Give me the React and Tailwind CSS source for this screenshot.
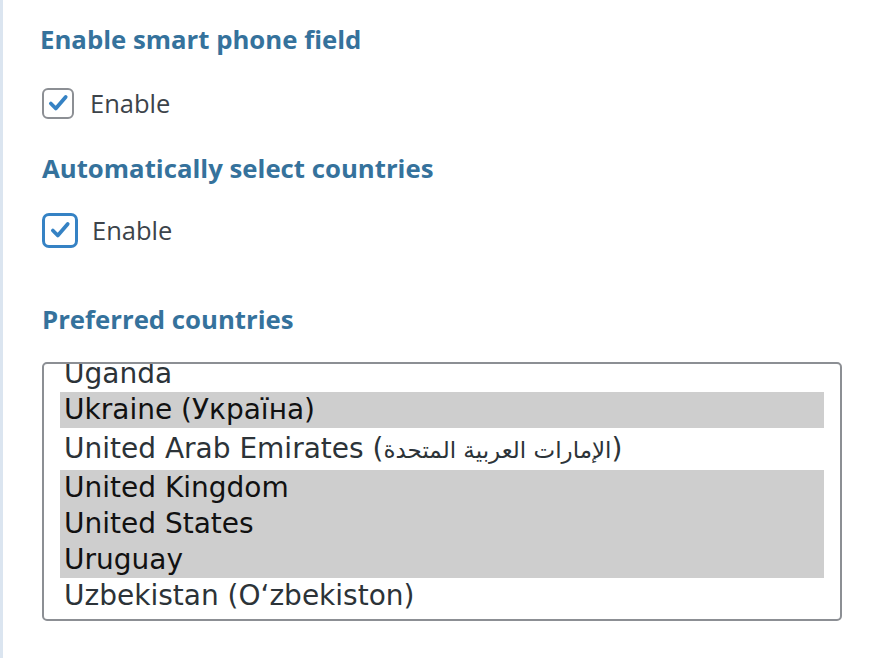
import React from "react";

function Check() {
  return (
    <svg viewBox="0 0 20 20" className="w-[22px] h-[22px]">
      <path d="M3.5 10.5 L8 15 L17 4.5" fill="none" stroke="#3582c4" strokeWidth="3.4" strokeLinecap="round" strokeLinejoin="round" />
    </svg>
  );
}

const options = [
  { t: "Uganda", sel: false },
  { t: "Ukraine (Україна)", sel: true },
  { t: "United Arab Emirates (", ar: "الإمارات العربية المتحدة", sel: false },
  { t: "United Kingdom", sel: true },
  { t: "United States", sel: true },
  { t: "Uruguay", sel: true },
  { t: "Uzbekistan (O‘zbekiston)", sel: false },
];

export default function App() {
  return (
    <div className="w-[884px] h-[658px] bg-white border-l-[3px] border-[#dbe5f0] overflow-hidden" style={{ fontFamily: "'Open Sans', 'Liberation Sans', sans-serif" }}>
      <div className="pl-[37px] pt-[24px] flex flex-col">
        <h2 className="h-[30px] leading-[30px] text-[25.75px] font-bold text-[#35729c] whitespace-nowrap">Enable smart phone field</h2>
        <label className="flex items-center mt-[33px] ml-[2px] h-[32px]">
          <span className="w-[32px] h-[31px] rounded-[6px] border-2 border-[#8c8f94] flex items-center justify-center">
            <Check />
          </span>
          <span className="ml-[16px] text-[25.5px] leading-[32px] text-[#3c434a]">Enable</span>
        </label>
        <h2 className="mt-[34px] ml-[2px] h-[30px] leading-[30px] text-[25.75px] font-bold text-[#35729c] whitespace-nowrap">Automatically select countries</h2>
        <label className="flex items-center mt-[29px] ml-[2px] h-[36px]">
          <span className="w-[36px] h-[35px] rounded-[7px] border-[3px] border-[#3582c4] flex items-center justify-center">
            <Check />
          </span>
          <span className="ml-[14px] text-[25.5px] leading-[36px] text-[#3c434a]">Enable</span>
        </label>
        <h2 className="mt-[56px] ml-[2px] h-[30px] leading-[30px] text-[25.75px] font-bold text-[#35729c] whitespace-nowrap">Preferred countries</h2>
        <div className="mt-[28px] ml-[2px] w-[800px] h-[259px] border-2 border-[#8c8f94] rounded-[5px] overflow-hidden">
          <div className="-mt-[8px] px-[16px]" style={{ fontFamily: "'DejaVu Sans', sans-serif" }}>
            {options.map((o) => (
              <div
                key={o.t}
                className={`${o.ar ? "h-[42px] leading-[42px]" : "h-[36px] leading-[36px]"} text-[28px] pl-[4px] whitespace-nowrap ${o.sel ? "bg-[#cecece] text-[#111]" : "text-[#2c3338]"}`}
              >
                {o.t}
                {o.ar && <span dir="rtl" className="text-[23px]">{o.ar}</span>}
                {o.ar && ")"}
              </div>
            ))}
          </div>
        </div>
      </div>
    </div>
  );
}
